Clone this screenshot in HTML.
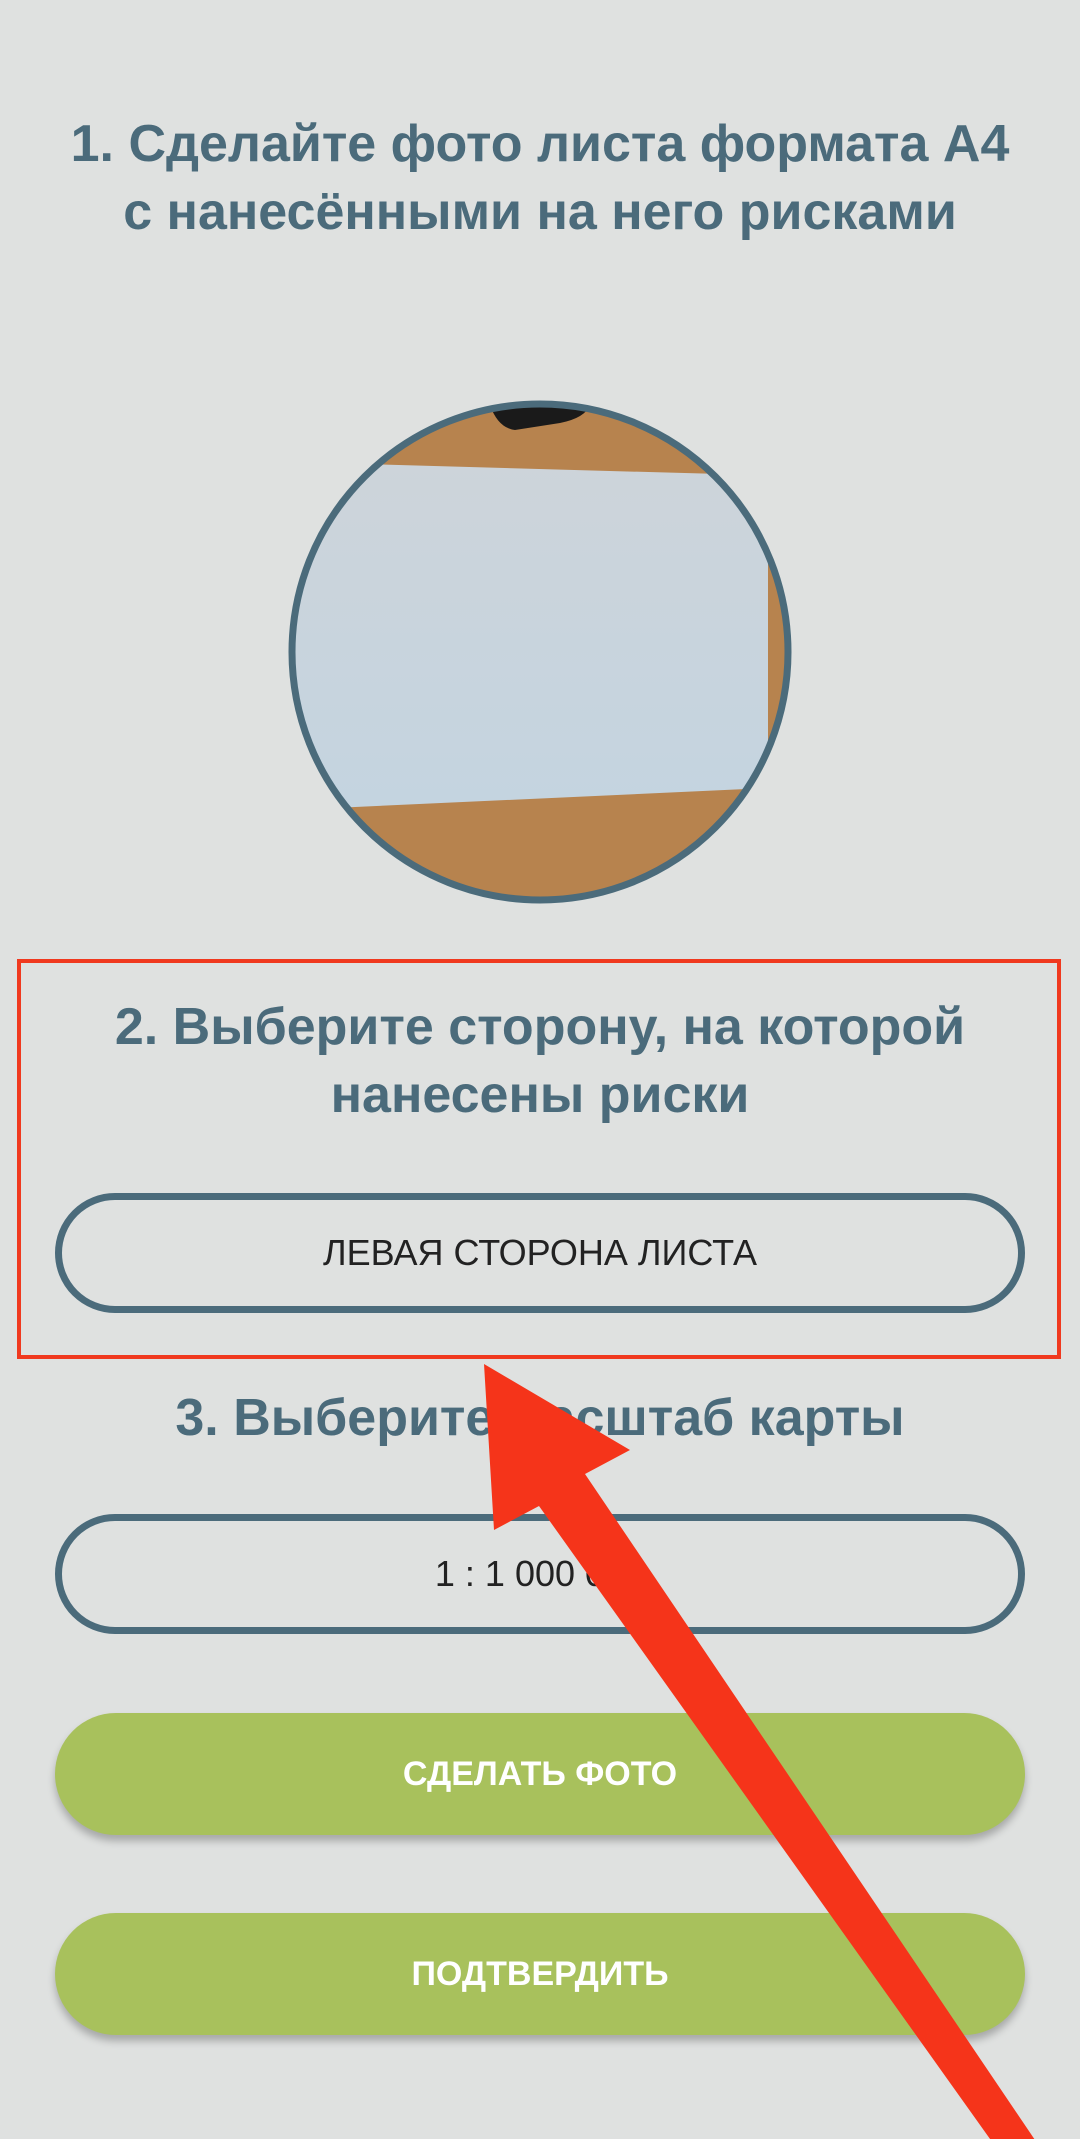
<!DOCTYPE html>
<html><head><meta charset="utf-8"><style>
*{margin:0;padding:0;box-sizing:border-box}
body{width:1080px;height:2139px;background:#dfe1e0;font-family:"Liberation Sans",sans-serif;position:relative;overflow:hidden}
.t{position:absolute;left:0;width:1080px;text-align:center;color:#4b6b7b;font-weight:bold;font-size:52px;line-height:68px}
.ob{position:absolute;left:55px;width:970px;height:120px;border:7px solid #4b6b7b;border-radius:60px;text-align:center;line-height:106px;font-size:36px;color:#222}
.gb{position:absolute;left:55px;width:970px;height:122px;border-radius:61px;background:#a8c15c;color:#fff;font-weight:bold;font-size:34px;text-align:center;line-height:122px;box-shadow:0 6px 8px rgba(0,0,0,.25)}
</style></head><body>
<div class="t" style="top:110px">1. Сделайте фото листа формата А4<br>с нанесёнными на него рисками</div>
<svg style="position:absolute;left:0;top:0" width="1080" height="2139">
<defs><clipPath id="c"><circle cx="540" cy="652" r="248"/></clipPath>
<linearGradient id="p" x1="0" y1="0" x2="0" y2="1"><stop offset="0" stop-color="#cdd4da"/><stop offset="1" stop-color="#c4d4e0"/></linearGradient></defs>
<g clip-path="url(#c)">
<rect x="280" y="390" width="520" height="520" fill="#b7834e"/>
<path d="M490 405 L590 405 Q585 418 560 423 L515 430 Q498 428 490 405 Z" fill="#1a1a1a"/>
<polygon points="290,462 790,476 768,560 768,788 290,810" fill="url(#p)"/>
</g>
<circle cx="540" cy="652" r="248" fill="none" stroke="#4b6b7b" stroke-width="7"/>
<rect x="19" y="961" width="1040" height="396" fill="none" stroke="#f0391f" stroke-width="4"/>
</svg>
<div class="t" style="top:993px">2. Выберите сторону, на которой<br>нанесены риски</div>
<div class="ob" style="top:1193px">ЛЕВАЯ СТОРОНА ЛИСТА</div>
<div class="t" style="top:1384px">3. Выберите масштаб карты</div>
<div class="ob" style="top:1514px">1 : 1 000 000</div>
<div class="gb" style="top:1713px">СДЕЛАТЬ ФОТО</div>
<div class="gb" style="top:1913px">ПОДТВЕРДИТЬ</div>
<svg style="position:absolute;left:0;top:0" width="1080" height="2139">
<polygon points="484,1364 630,1450 585,1474 1035,2140 1005,2160 539,1506 494,1530" fill="#f5341a"/>
</svg>
</body></html>
